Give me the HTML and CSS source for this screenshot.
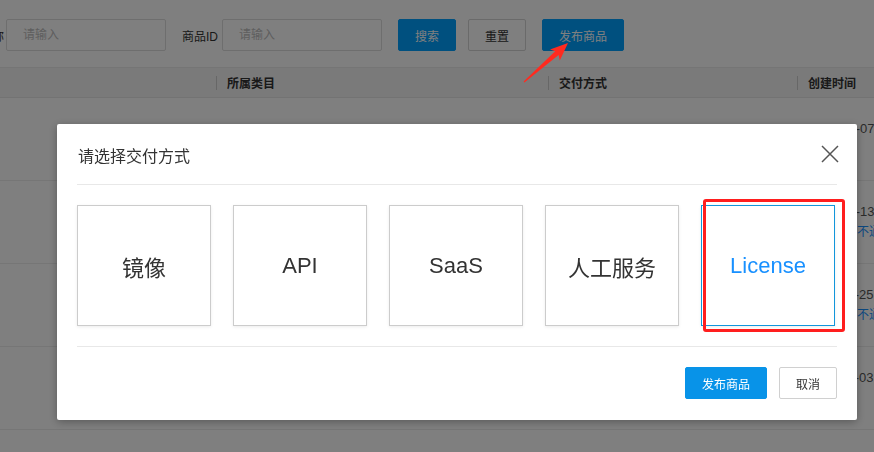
FILE: index.html
```html
<!DOCTYPE html>
<html lang="zh-CN">
<head>
<meta charset="utf-8">
<title>发布商品</title>
<link rel="stylesheet" href="styles.css">
</head>
<body>
<div class="page">
  <div class="search">
    <span class="label">商品名称</span>
    <div class="input">请输入</div>
    <span class="label label-id">商品ID</span>
    <div class="input">请输入</div>
    <button class="btn btn-blue btn-search">搜索</button>
    <button class="btn btn-plain btn-reset">重置</button>
    <button class="btn btn-blue btn-publish">发布商品</button>
  </div>
  <div class="table">
    <div class="thead">
      <div class="th th-first">商品名称</div>
      <div class="th">所属类目</div>
      <div class="th">交付方式</div>
      <div class="th">创建时间</div>
    </div>
    <div class="tr">
      <div class="td"></div><div class="td"></div><div class="td"></div>
      <div class="td td-date"><span>2021-12-07 10:23</span><span class="status">&nbsp;</span></div>
    </div>
    <div class="tr">
      <div class="td"></div><div class="td"></div><div class="td"></div>
      <div class="td td-date"><span>2021-12-13 14:05</span><span class="status">不通过</span></div>
    </div>
    <div class="tr">
      <div class="td"></div><div class="td"></div><div class="td"></div>
      <div class="td td-date"><span>2021-11-25 09:41</span><span class="status">不通过</span></div>
    </div>
    <div class="tr">
      <div class="td"></div><div class="td"></div><div class="td"></div>
      <div class="td td-date"><span>2021-11-03 16:12</span><span class="status">&nbsp;</span></div>
    </div>
    <div class="tr"></div>
  </div>
</div>

<div class="mask"></div>

<div class="modal">
  <div class="modal-header">
    <span class="modal-title">请选择交付方式</span>
    <svg class="close" width="18" height="18" viewBox="0 0 18 18" aria-hidden="true">
      <path d="M1 1 L17 17 M17 1 L1 17" stroke="#555" stroke-width="1.5" fill="none"/>
    </svg>
  </div>
  <div class="modal-body">
    <div class="card">镜像</div>
    <div class="card">API</div>
    <div class="card">SaaS</div>
    <div class="card">人工服务</div>
    <div class="card card-active">License</div>
  </div>
  <div class="modal-footer">
    <button class="mbtn mbtn-primary">发布商品</button>
    <button class="mbtn mbtn-default">取消</button>
  </div>
</div>

<div class="mark-rect"></div>
<svg class="mark-arrow" width="874" height="452" viewBox="0 0 874 452" aria-hidden="true">
  <polygon fill="#ff2a1f" points="523.6,81.6 555.2,51.2 550,49.6 568,43 559.8,60.6 558.6,54.9 524.4,82.4"/>
</svg>
</body>
</html>
```

FILE: styles.css
```css
html, body {
  margin: 0;
  padding: 0;
  background: #fff;
  width: 874px;
  height: 452px;
  overflow: hidden;
  font-family: "Liberation Sans", "Noto Sans CJK SC", sans-serif;
  color: #333;
}

.page {
  width: 874px;
}

.search {
  display: flex;
  align-items: center;
  height: 32px;
  padding-top: 19px;
  margin-left: -44px;
  font-size: 12px;
}

.label {
  margin-right: 2px;
  color: #333;
}

.label-id {
  margin-left: 16px;
  margin-right: 4px;
}

.input {
  box-sizing: border-box;
  width: 160px;
  height: 32px;
  border: 1px solid #dcdcdc;
  border-radius: 2px;
  padding-left: 16px;
  line-height: 30px;
  color: #bdbdbd;
  font-size: 12px;
}

.btn {
  box-sizing: border-box;
  height: 32px;
  border-radius: 2px;
  font-family: inherit;
  font-size: 12px;
  padding: 0;
  cursor: pointer;
}

.btn-blue {
  background: #00a0fe;
  border: 1px solid #00a0fe;
  color: #fff;
}

.btn-plain {
  background: #fff;
  border: 1px solid #d4d4d4;
  color: #333;
}

.btn-search { width: 58px; margin-left: 16px; }
.btn-reset { width: 58px; margin-left: 12px; }
.btn-publish { width: 82px; margin-left: 16px; }

.table {
  margin-top: 16px;
  font-size: 12px;
}

.thead {
  display: grid;
  grid-template-columns: 216px 332px 249px 77px;
  height: 31px;
  background: #f4f4f4;
  border-top: 1px solid #ebebeb;
  border-bottom: 1px solid #e6e6e6;
  box-sizing: border-box;
  align-items: center;
}

.th {
  position: relative;
  padding-left: 11px;
  font-weight: bold;
  color: #333;
  white-space: nowrap;
  overflow: hidden;
}

.th::before {
  content: "";
  position: absolute;
  left: 0;
  top: 50%;
  width: 1px;
  height: 14px;
  margin-top: -7px;
  background: #cfcfcf;
}

.th-first {
  visibility: hidden;
}

.tr {
  display: grid;
  grid-template-columns: 216px 332px 249px 77px;
  height: 83px;
  box-sizing: border-box;
  border-bottom: 1px solid #ececec;
}

.td {
  display: flex;
  flex-direction: column;
  justify-content: center;
  padding-left: 11px;
  white-space: nowrap;
  overflow: hidden;
  font-size: 13px;
  color: #555;
}

.td-date span {
  line-height: 20px;
}

.status {
  color: #1890ff;
  padding-left: 49px;
  font-size: 12px;
}

.mask {
  position: fixed;
  inset: 0;
  background: rgba(0, 0, 0, 0.5);
}

.modal {
  position: fixed;
  left: 57px;
  top: 124px;
  width: 800px;
  height: 296px;
  box-sizing: border-box;
  padding: 0 20px;
  background: #fff;
  border-radius: 2px;
  box-shadow: 0 2px 8px rgba(0, 0, 0, 0.3);
  display: flex;
  flex-direction: column;
}

.modal-header {
  height: 61px;
  box-sizing: border-box;
  padding-top: 2px;
  display: flex;
  align-items: center;
  justify-content: space-between;
  border-bottom: 1px solid #e8e8e8;
}

.modal-title {
  padding-left: 1px;
  font-size: 16px;
  color: #333;
  font-family: "Noto Sans CJK SC", sans-serif;
}

.close {
  margin-right: -2px;
  margin-top: -2px;
}

.modal-body {
  display: flex;
  gap: 22px;
  padding-top: 20px;
  padding-bottom: 20px;
  border-bottom: 1px solid #e8e8e8;
}

.card {
  box-sizing: border-box;
  width: 134px;
  height: 121px;
  border: 1px solid #cccccc;
  box-shadow: 0 1px 3px rgba(0, 0, 0, 0.08);
  display: flex;
  align-items: center;
  justify-content: center;
  font-size: 22px;
  color: #333;
}

.card-active {
  border-color: #1296db;
  color: #1890ff;
}

.modal-footer {
  display: flex;
  justify-content: flex-end;
  gap: 12px;
  padding-top: 20px;
}

.mbtn {
  box-sizing: border-box;
  height: 32px;
  border-radius: 2px;
  font-family: inherit;
  font-size: 12px;
  padding: 0;
}

.mbtn-primary {
  width: 82px;
  background: #0893e8;
  border: 1px solid #0893e8;
  color: #fff;
}

.mbtn-default {
  width: 58px;
  background: #fff;
  border: 1px solid #d0d0d0;
  color: #333;
}

.mark-rect {
  position: fixed;
  left: 703px;
  top: 199px;
  width: 142px;
  height: 133px;
  box-sizing: border-box;
  border: 3px solid #ff1e1e;
  border-radius: 3px;
}

.mark-arrow {
  position: fixed;
  left: 0;
  top: 0;
  pointer-events: none;
}
```
